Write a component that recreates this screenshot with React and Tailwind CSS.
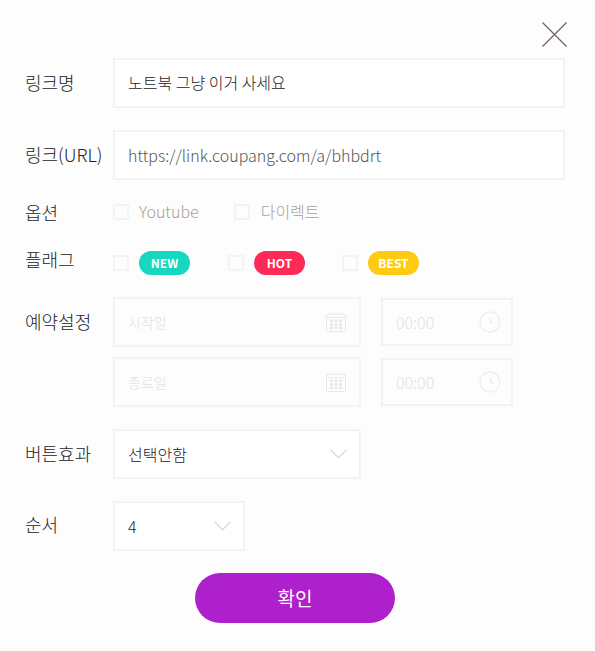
import { useState } from "react";

const font = "[font-family:'Noto_Sans_CJK_KR','Noto_Sans',sans-serif]";

function Label({ children, className = "" }) {
  return (
    <div className={`w-[88px] shrink-0 whitespace-nowrap text-[18px] font-light leading-[24px] text-[#222222] ${className}`}>
      {children}
    </div>
  );
}

function Check() {
  return <span className="block h-4 w-4 shrink-0 border-2 border-[#f3f3f3] bg-[#fdfdfd]" />;
}

function Calendar() {
  return (
    <svg width="20" height="20" viewBox="0 0 20 20" fill="none" className="shrink-0">
      <rect x="0.5" y="2.5" width="19" height="17" stroke="#e9e9e9" />
      <path d="M0.5 5.5H19.5M4 0.5V3M7 0.5V3M10 0.5V3M13 0.5V3M16 0.5V3" stroke="#e9e9e9" />
      <path
        d="M4 7.5h3v2.5H4zM8.5 7.5h3v2.5h-3zM13 7.5h3v2.5h-3zM4 11.2h3v2.5H4zM8.5 11.2h3v2.5h-3zM13 11.2h3v2.5h-3zM4 14.8h3v2.5H4zM8.5 14.8h3v2.5h-3zM13 14.8h3v2.5h-3z"
        fill="#e6e6e6"
      />
    </svg>
  );
}

function Clock() {
  return (
    <svg width="22" height="22" viewBox="0 0 22 22" fill="none" className="shrink-0">
      <circle cx="11" cy="11" r="10" stroke="#f0f0f0" strokeWidth="1.5" />
      <path d="M11.5 7.5v4.5H15" stroke="#e8e8e8" />
    </svg>
  );
}

function Chevron() {
  return (
    <svg width="17" height="10" viewBox="0 0 17 10" fill="none" className="shrink-0">
      <path d="M0.5 0.7L8.5 9L16.5 0.7" stroke="#d9d3cf" strokeWidth="1.2" />
    </svg>
  );
}

function Flag({ color, children }) {
  return (
    <span
      className={`flex h-6 w-[51px] items-center justify-center rounded-full text-[12px] font-bold text-white ${color}`}
    >
      {children}
    </span>
  );
}

export default function App() {
  const [name] = useState("노트북 그냥 이거 사세요");
  const [url] = useState("https://link.coupang.com/a/bhbdrt");

  return (
    <div className={`h-[651px] w-[595px] overflow-hidden bg-[#fdfdfd] pl-[25px] pt-[22px] ${font}`}>
      {/* Close */}
      <div className="flex h-[36px] justify-end pr-[28px]">
        <svg width="25" height="25" viewBox="0 0 25 25" fill="none">
          <path d="M0.5 0.5L24.5 24.5M24.5 0.5L0.5 24.5" stroke="#6f625c" strokeWidth="1.2" />
        </svg>
      </div>

      {/* Link name */}
      <div className="flex items-center">
        <Label className="-mt-[2px]">링크명</Label>
        <div className="flex h-[50px] w-[452px] items-center border-2 border-[#f3f3f3] bg-white pb-[2px] pl-[13px] text-[16px] font-light text-[#222222]">
          {name}
        </div>
      </div>

      {/* Link URL */}
      <div className="mt-[22px] flex items-center">
        <Label className="-mt-[2px]">링크(URL)</Label>
        <div className="flex h-[50px] w-[452px] items-center border-2 border-[#f3f3f3] bg-white pl-[13px] text-[16px] font-light text-[#555555]">
          {url}
        </div>
      </div>

      {/* Options */}
      <div className="mt-[20px] flex h-[24px] items-center">
        <Label>옵션</Label>
        <Check />
        <span className="ml-[10px] -translate-y-[1.5px] text-[16px] font-light text-[#a89f98]">Youtube</span>
        <span className="ml-[35px]"><Check /></span>
        <span className="ml-[11px] -translate-y-[1.5px] text-[16px] font-light text-[#a89f98]">다이렉트</span>
      </div>

      {/* Flags */}
      <div className="mt-[27px] flex h-[24px] items-center">
        <Label className="-mt-[8px]">플래그</Label>
        <Check />
        <span className="ml-[10px]"><Flag color="bg-[#17d7c1]">NEW</Flag></span>
        <span className="ml-[38px]"><Check /></span>
        <span className="ml-[10px]"><Flag color="bg-[#ff2a55]">HOT</Flag></span>
        <span className="ml-[37px]"><Check /></span>
        <span className="ml-[10px]"><Flag color="bg-[#ffcb12]">BEST</Flag></span>
      </div>

      {/* Schedule */}
      <div className="mt-[22px] flex">
        <Label className="mt-[12px]">예약설정</Label>
        <div className="flex flex-col gap-[10px]">
          {["시작일", "종료일"].map((placeholder) => (
            <div key={placeholder} className="flex items-center gap-5">
              <div className="flex h-[50px] w-[248px] items-center justify-between border-2 border-[#f3f3f3] pl-[13px] pr-[13px] text-[14px] font-light text-[#e6e0dc]">
                {placeholder}
                <Calendar />
              </div>
              <div className="flex h-[48px] w-[132px] items-center justify-between border-2 border-[#f3f3f3] pl-[13px] pr-[10px] text-[16px] font-light text-[#e6e0dc]">
                00:00
                <Clock />
              </div>
            </div>
          ))}
        </div>
      </div>

      {/* Button effect */}
      <div className="mt-[22px] flex items-center">
        <Label className="-mt-[2px]">버튼효과</Label>
        <div className="flex h-[50px] w-[248px] items-center justify-between border-2 border-[#f3f3f3] bg-white pl-[13px] pr-[12px] text-[16px] font-light text-[#222222]">
          선택안함
          <Chevron />
        </div>
      </div>

      {/* Order */}
      <div className="mt-[22px] flex items-center">
        <Label className="-mt-[4px]">순서</Label>
        <div className="flex h-[50px] w-[132px] items-center justify-between border-2 border-[#f3f3f3] bg-white pl-[13px] pr-[12px] text-[16px] font-light text-[#222222]">
          4
          <Chevron />
        </div>
      </div>

      {/* Submit */}
      <div className="mt-[22px] pl-[170px]">
        <button className="h-[50px] w-[200px] rounded-full bg-[#ae20cb] text-[19px] font-normal text-white">
          확인
        </button>
      </div>
    </div>
  );
}
